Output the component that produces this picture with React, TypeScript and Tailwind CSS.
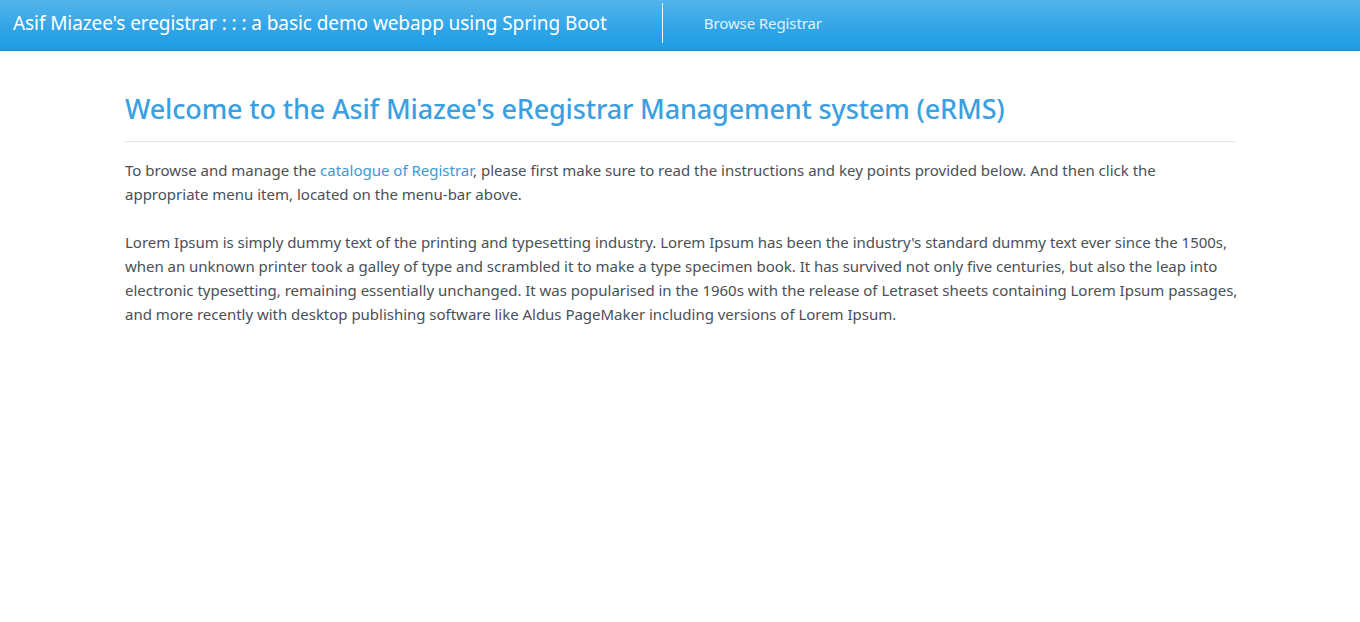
export default function App() {
  return (
    <div className="min-h-[622px] bg-white font-['Noto_Sans',sans-serif] text-[#495057]">
      <nav className="flex h-[51px] items-start border-b border-[#1b8fd2] bg-[linear-gradient(#54b4eb,#2fa4e7_60%,#1d9ce5)]">
        <div className="mt-[3px] flex h-[40px] items-center border-r border-white/90 pl-[13px] pr-[55px]">
          <span className="whitespace-nowrap text-[19px] tracking-[-0.08px] text-white">Asif Miazee's eregistrar : : : a basic demo webapp using Spring Boot</span>
        </div>
        <a className="mt-[3px] flex h-[40px] items-center pl-[41px] text-[15px] tracking-[-0.1px] text-white/85">Browse Registrar</a>
      </nav>
      <main className="mx-auto w-[1110px] pt-[41px]">
        <h2 className="text-[27px] font-medium leading-[34px] tracking-[-0.15px] text-[#3aa0e2]">Welcome to the Asif Miazee's eRegistrar Management system (eRMS)</h2>
        <hr className="mt-[15px] border-t border-[#e5e5e5]" />
        <p className="mt-[16px] whitespace-nowrap text-[15px] leading-[24px]">
          To browse and manage the <a className="text-[#3a9ad9]">catalogue of Registrar</a>, please first make sure to read the instructions and key points provided below. And then click the<br />
          appropriate menu item, located on the menu-bar above.
        </p>
        <p className="mt-[24px] whitespace-nowrap text-[15px] leading-[24px] tracking-[-0.02px]">
          Lorem Ipsum is simply dummy text of the printing and typesetting industry. Lorem Ipsum has been the industry's standard dummy text ever since the 1500s,<br />
          when an unknown printer took a galley of type and scrambled it to make a type specimen book. It has survived not only five centuries, but also the leap into<br />
          electronic typesetting, remaining essentially unchanged. It was popularised in the 1960s with the release of Letraset sheets containing Lorem Ipsum passages,<br />
          and more recently with desktop publishing software like Aldus PageMaker including versions of Lorem Ipsum.
        </p>
      </main>
    </div>
  );
}
